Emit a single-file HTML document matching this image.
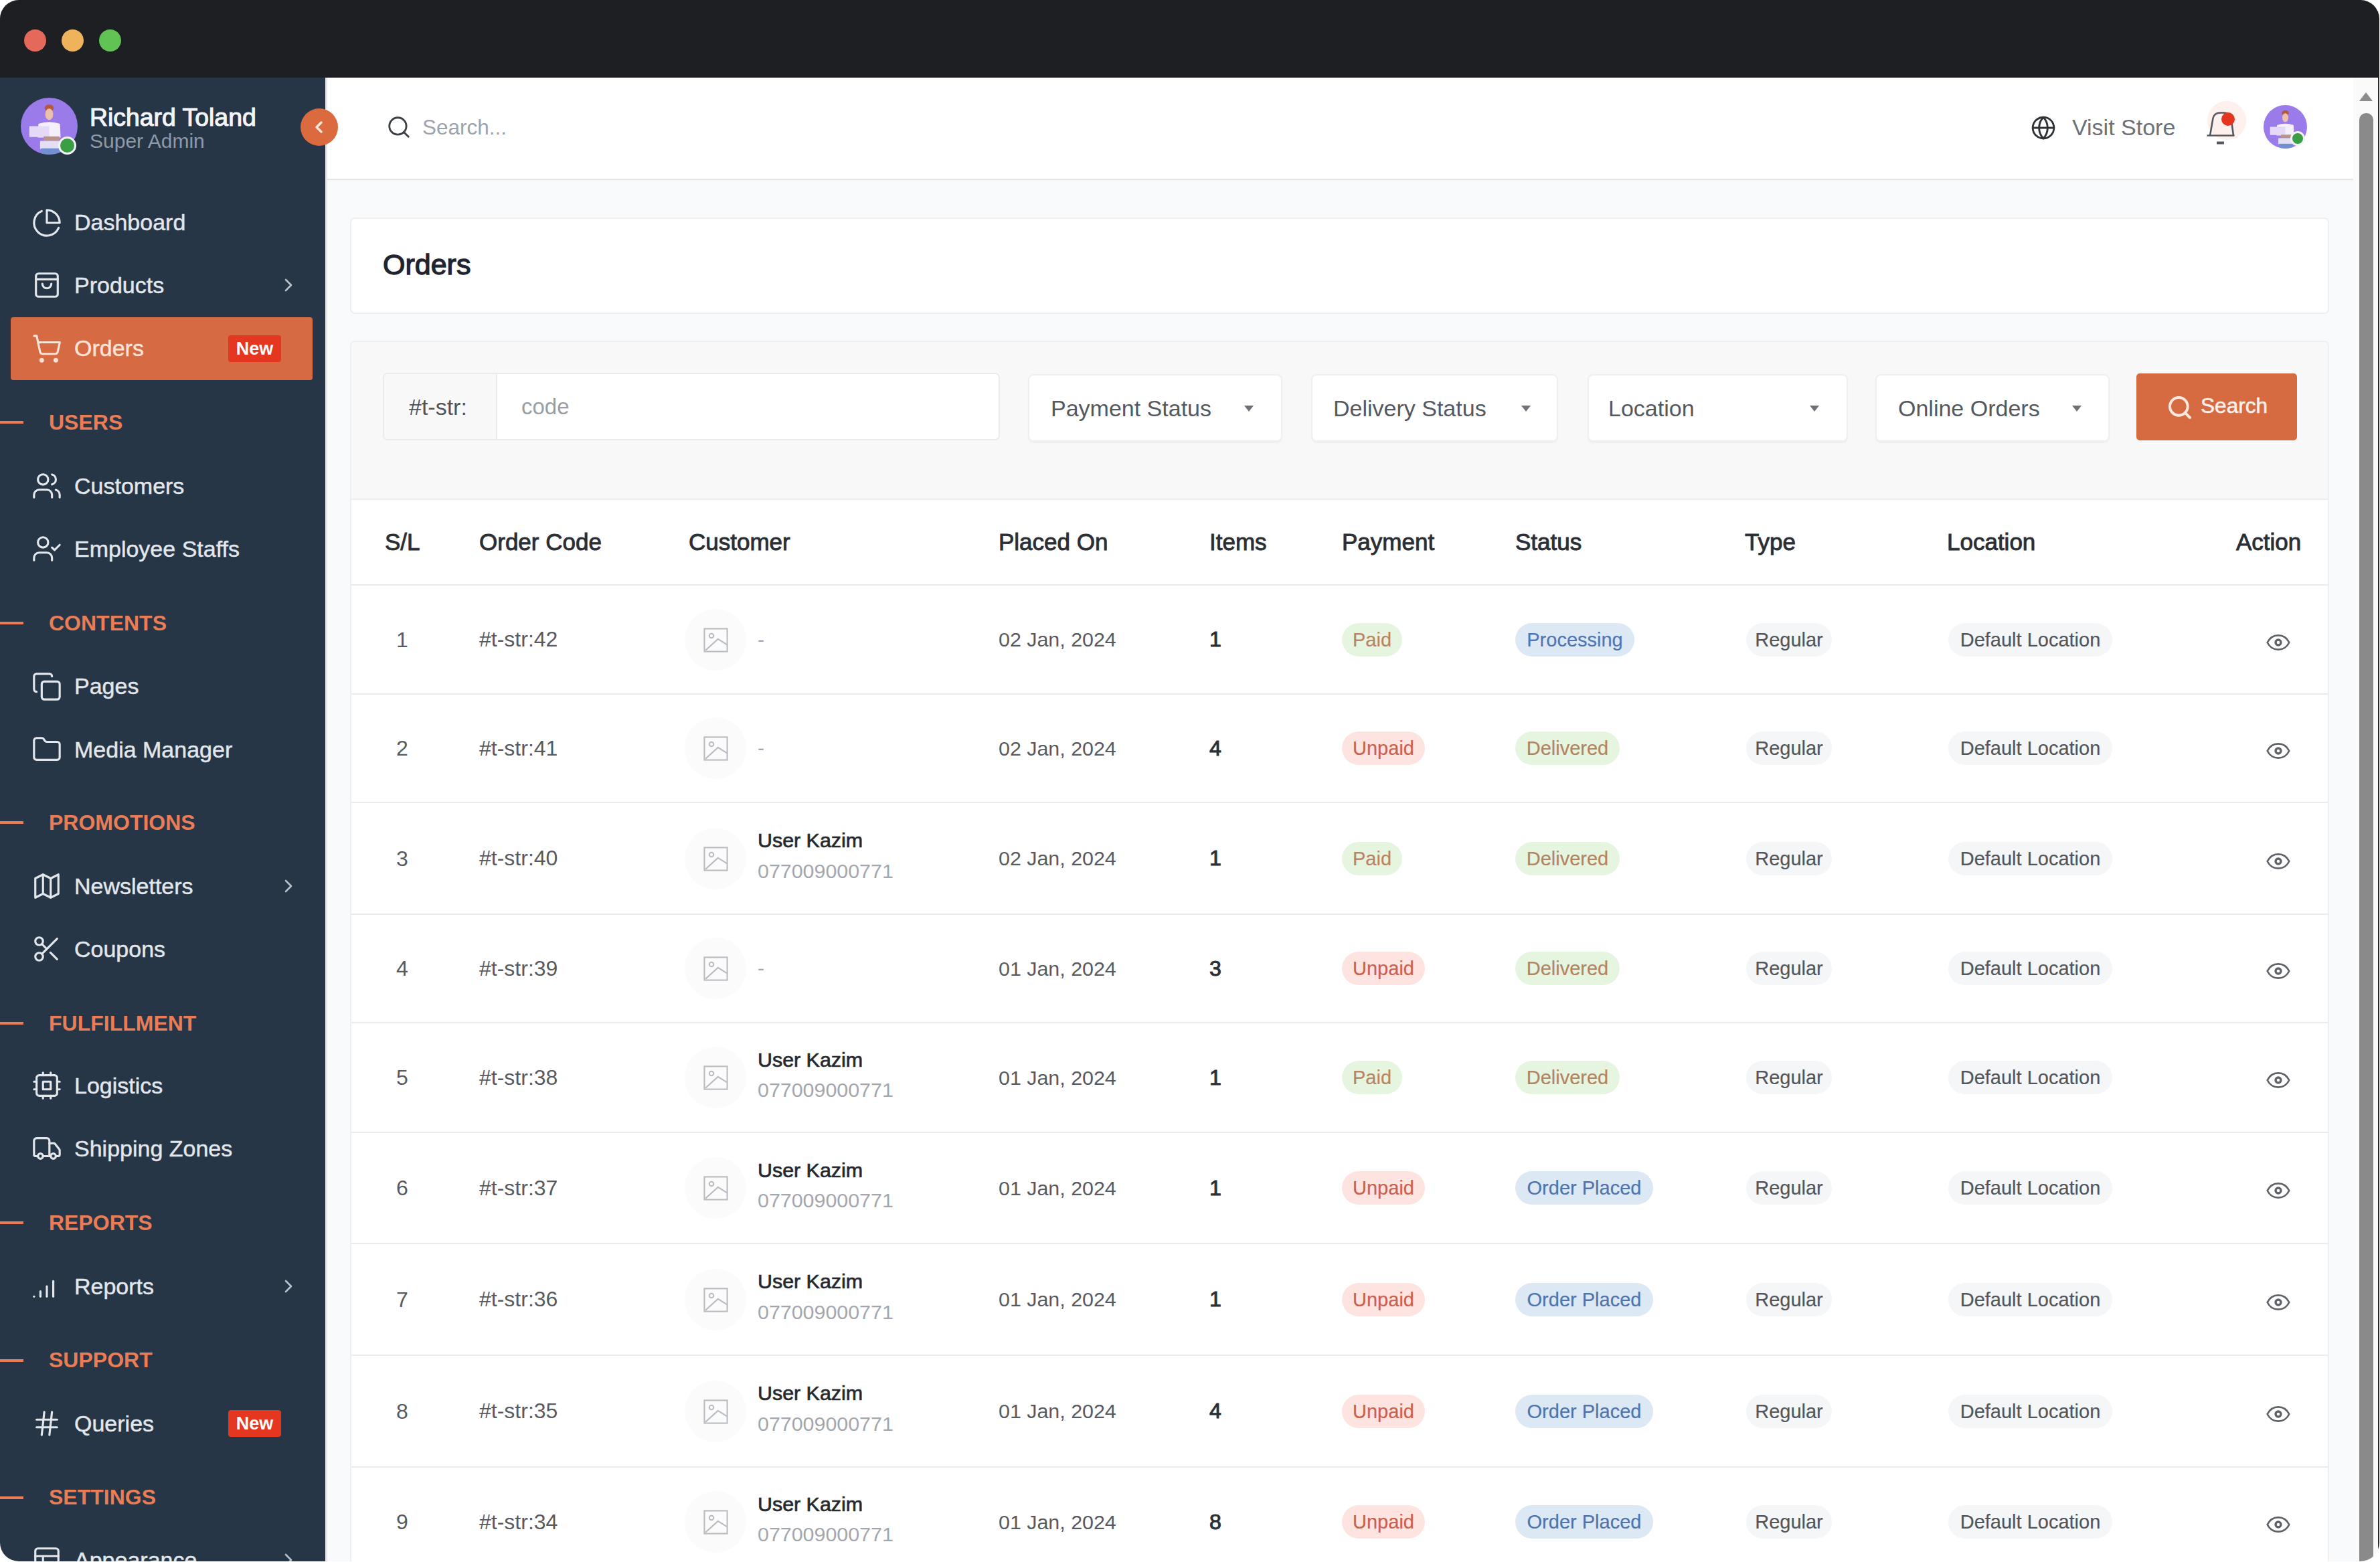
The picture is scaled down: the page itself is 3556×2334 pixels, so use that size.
<!DOCTYPE html><html><head><meta charset="utf-8"><style>
*{margin:0;padding:0;box-sizing:content-box}
html,body{width:3556px;height:2334px;overflow:hidden;background:#fff;font-family:"Liberation Sans", sans-serif}
#win{position:absolute;left:0;top:0;width:3555px;height:2333px;border-radius:28px;overflow:hidden;background:#f8f9fa}
#titlebar{position:absolute;left:0;top:0;width:100%;height:116px;background:#1e1f22}
#sidebar{position:absolute;left:0;top:116px;width:486px;height:2217px;background:#263647;overflow:hidden}
#sidebar > *{margin-top:-116px}
#main{position:absolute;left:486px;top:116px;width:3069px;height:2217px;background:#f9fafb;border-left:3px solid #e6e8eb;box-sizing:border-box}
#header{position:absolute;left:489px;top:116px;width:3027px;height:153px;background:#fff;border-bottom:2px solid #e6e6e8;box-sizing:border-box;box-shadow:0 1px 2px rgba(0,0,0,0.03)}
#sbtrack{position:absolute;left:3516px;top:116px;width:39px;height:2217px;background:#fafafb;border-right:2px solid #2b2b2e;box-sizing:border-box}
</style></head><body><div id="win"><div id="titlebar"></div><div style="position:absolute;left:36.0px;top:44.0px;width:33px;height:33px;border-radius:50%;background:#e5695b"></div><div style="position:absolute;left:91.5px;top:44.0px;width:33px;height:33px;border-radius:50%;background:#efb35c"></div><div style="position:absolute;left:147.5px;top:44.0px;width:33px;height:33px;border-radius:50%;background:#61c354"></div><div id="sidebar"><div style="position:absolute;left:30.5px;top:145.5px;width:85px;height:85px;border-radius:50%;background:#9b7bea;overflow:hidden"><svg width="85" height="85" viewBox="0 0 100 100" style="position:absolute;left:0;top:0"><ellipse cx="50" cy="18" rx="8" ry="6" fill="#b35a3c"/><ellipse cx="50" cy="29" rx="7" ry="10" fill="#ecc0ad"/><path d="M31 46 q19 -7 38 0 l1 24 h-40z" fill="#f4effa"/><rect x="15" y="50" width="35" height="19" rx="1" fill="#e4d9f6"/><rect x="40" y="68" width="28" height="8" fill="#b9948a"/><rect x="34" y="76" width="34" height="14" fill="#e3def3"/><rect x="36" y="89" width="32" height="11" fill="#7190d2"/></svg></div><div style="position:absolute;left:87.0px;top:203.5px;width:27px;height:27px;border-radius:50%;background:#3a9e44;box-sizing:border-box;border:3px solid #f3f3f3"></div><div style="position:absolute;left:134px;top:153.1px;height:44.9px;line-height:44.9px;font-size:37.4px;font-weight:400;color:#f2f4f7;white-space:nowrap;-webkit-text-stroke:1.1px #f2f4f7;">Richard Toland</div><div style="position:absolute;left:134px;top:193.0px;height:36.0px;line-height:36.0px;font-size:30px;font-weight:400;color:#8f99a8;white-space:nowrap;">Super Admin</div><svg style="position:absolute;left:47px;top:309.5px" width="46" height="46" viewBox="0 0 24 24" fill="none" stroke="#e3e7ec" stroke-width="1.65" stroke-linecap="round" stroke-linejoin="round"><path d="M21.2 15.9A10 10 0 1 1 8 2.8"/><path d="M22 12A10 10 0 0 0 12 2v10z"/></svg><div style="position:absolute;left:111px;top:312.1px;height:40.8px;line-height:40.8px;font-size:34px;font-weight:400;color:#e3e7ec;white-space:nowrap;-webkit-text-stroke:0.45px #e3e7ec;">Dashboard</div><svg style="position:absolute;left:47px;top:403.0px" width="46" height="46" viewBox="0 0 24 24" fill="none" stroke="#e3e7ec" stroke-width="1.65" stroke-linecap="round" stroke-linejoin="round"><rect x="3.5" y="3" width="17" height="18" rx="2"/><path d="M3.5 7.5h17"/><path d="M8.5 11a3.5 3.5 0 0 0 7 0"/></svg><div style="position:absolute;left:111px;top:405.6px;height:40.8px;line-height:40.8px;font-size:34px;font-weight:400;color:#e3e7ec;white-space:nowrap;-webkit-text-stroke:0.45px #e3e7ec;">Products</div><svg style="position:absolute;left:420px;top:414px" width="22" height="24" viewBox="0 0 22 24" fill="none" stroke="#b9c0ca" stroke-width="2.6" stroke-linecap="round" stroke-linejoin="round"><path d="M7 4l8 8-8 8"/></svg><div style="position:absolute;left:16px;top:473.5px;width:451px;height:94px;border-radius:4px;background:#d66b43"></div><svg style="position:absolute;left:47px;top:497.5px" width="46" height="46" viewBox="0 0 24 24" fill="none" stroke="#fbe3d8" stroke-width="1.65" stroke-linecap="round" stroke-linejoin="round"><circle cx="8" cy="21" r="1"/><circle cx="19" cy="21" r="1"/><path d="M2.05 2.05h2l2.66 12.42a2 2 0 0 0 2 1.58h9.78a2 2 0 0 0 1.95-1.57l1.65-7.43H5.12"/></svg><div style="position:absolute;left:111px;top:500.1px;height:40.8px;line-height:40.8px;font-size:34px;font-weight:400;color:#fbe3d8;white-space:nowrap;-webkit-text-stroke:0.45px #fbe3d8;">Orders</div><div style="position:absolute;left:341px;top:500.5px;width:79px;height:40px;border-radius:4px;background:#e5371f;color:#fff;font-size:27px;font-weight:700;line-height:40px;text-align:center">New</div><div style="position:absolute;left:0;top:629px;width:35px;height:4px;background:#ea7d55"></div><div style="position:absolute;left:73px;top:611.8px;height:38.4px;line-height:38.4px;font-size:32px;font-weight:700;color:#ea7d55;white-space:nowrap;">USERS</div><svg style="position:absolute;left:47px;top:703.0px" width="46" height="46" viewBox="0 0 24 24" fill="none" stroke="#e3e7ec" stroke-width="1.65" stroke-linecap="round" stroke-linejoin="round"><path d="M16 21v-2a4 4 0 0 0-4-4H6a4 4 0 0 0-4 4v2"/><circle cx="9" cy="7" r="4"/><path d="M22 21v-2a4 4 0 0 0-3-3.87"/><path d="M16 3.13a4 4 0 0 1 0 7.75"/></svg><div style="position:absolute;left:111px;top:705.6px;height:40.8px;line-height:40.8px;font-size:34px;font-weight:400;color:#e3e7ec;white-space:nowrap;-webkit-text-stroke:0.45px #e3e7ec;">Customers</div><svg style="position:absolute;left:47px;top:797.0px" width="46" height="46" viewBox="0 0 24 24" fill="none" stroke="#e3e7ec" stroke-width="1.65" stroke-linecap="round" stroke-linejoin="round"><path d="M16 21v-2a4 4 0 0 0-4-4H6a4 4 0 0 0-4 4v2"/><circle cx="9" cy="7" r="4"/><polyline points="16 11 18 13 22 9"/></svg><div style="position:absolute;left:111px;top:799.6px;height:40.8px;line-height:40.8px;font-size:34px;font-weight:400;color:#e3e7ec;white-space:nowrap;-webkit-text-stroke:0.45px #e3e7ec;">Employee Staffs</div><div style="position:absolute;left:0;top:929px;width:35px;height:4px;background:#ea7d55"></div><div style="position:absolute;left:73px;top:911.8px;height:38.4px;line-height:38.4px;font-size:32px;font-weight:700;color:#ea7d55;white-space:nowrap;">CONTENTS</div><svg style="position:absolute;left:47px;top:1002.5px" width="46" height="46" viewBox="0 0 24 24" fill="none" stroke="#e3e7ec" stroke-width="1.65" stroke-linecap="round" stroke-linejoin="round"><rect x="8" y="8" width="14" height="14" rx="2"/><path d="M4 16c-1.1 0-2-.9-2-2V4c0-1.1.9-2 2-2h10c1.1 0 2 .9 2 2"/></svg><div style="position:absolute;left:111px;top:1005.1px;height:40.8px;line-height:40.8px;font-size:34px;font-weight:400;color:#e3e7ec;white-space:nowrap;-webkit-text-stroke:0.45px #e3e7ec;">Pages</div><svg style="position:absolute;left:47px;top:1097.0px" width="46" height="46" viewBox="0 0 24 24" fill="none" stroke="#e3e7ec" stroke-width="1.65" stroke-linecap="round" stroke-linejoin="round"><path d="M4 20h16a2 2 0 0 0 2-2V8a2 2 0 0 0-2-2h-7.93a2 2 0 0 1-1.66-.9l-.82-1.2A2 2 0 0 0 7.93 3H4a2 2 0 0 0-2 2v13c0 1.1.9 2 2 2Z"/></svg><div style="position:absolute;left:111px;top:1099.6px;height:40.8px;line-height:40.8px;font-size:34px;font-weight:400;color:#e3e7ec;white-space:nowrap;-webkit-text-stroke:0.45px #e3e7ec;">Media Manager</div><div style="position:absolute;left:0;top:1227px;width:35px;height:4px;background:#ea7d55"></div><div style="position:absolute;left:73px;top:1209.8px;height:38.4px;line-height:38.4px;font-size:32px;font-weight:700;color:#ea7d55;white-space:nowrap;">PROMOTIONS</div><svg style="position:absolute;left:47px;top:1301.0px" width="46" height="46" viewBox="0 0 24 24" fill="none" stroke="#e3e7ec" stroke-width="1.65" stroke-linecap="round" stroke-linejoin="round"><polygon points="3 6 9 3 15 6 21 3 21 18 15 21 9 18 3 21"/><line x1="9" x2="9" y1="3" y2="18"/><line x1="15" x2="15" y1="6" y2="21"/></svg><div style="position:absolute;left:111px;top:1303.6px;height:40.8px;line-height:40.8px;font-size:34px;font-weight:400;color:#e3e7ec;white-space:nowrap;-webkit-text-stroke:0.45px #e3e7ec;">Newsletters</div><svg style="position:absolute;left:420px;top:1312px" width="22" height="24" viewBox="0 0 22 24" fill="none" stroke="#b9c0ca" stroke-width="2.6" stroke-linecap="round" stroke-linejoin="round"><path d="M7 4l8 8-8 8"/></svg><svg style="position:absolute;left:47px;top:1395.0px" width="46" height="46" viewBox="0 0 24 24" fill="none" stroke="#e3e7ec" stroke-width="1.65" stroke-linecap="round" stroke-linejoin="round"><circle cx="6" cy="6" r="3"/><path d="M8.12 8.12 12 12"/><path d="M20 4 8.12 15.88"/><circle cx="6" cy="18" r="3"/><path d="M14.8 14.8 20 20"/></svg><div style="position:absolute;left:111px;top:1397.6px;height:40.8px;line-height:40.8px;font-size:34px;font-weight:400;color:#e3e7ec;white-space:nowrap;-webkit-text-stroke:0.45px #e3e7ec;">Coupons</div><div style="position:absolute;left:0;top:1527px;width:35px;height:4px;background:#ea7d55"></div><div style="position:absolute;left:73px;top:1509.8px;height:38.4px;line-height:38.4px;font-size:32px;font-weight:700;color:#ea7d55;white-space:nowrap;">FULFILLMENT</div><svg style="position:absolute;left:47px;top:1599.0px" width="46" height="46" viewBox="0 0 24 24" fill="none" stroke="#e3e7ec" stroke-width="1.65" stroke-linecap="round" stroke-linejoin="round"><rect x="4" y="4" width="16" height="16" rx="2"/><rect x="9" y="9" width="6" height="6"/><path d="M15 2v2M15 20v2M2 15h2M2 9h2M20 15h2M20 9h2M9 2v2M9 20v2"/></svg><div style="position:absolute;left:111px;top:1601.6px;height:40.8px;line-height:40.8px;font-size:34px;font-weight:400;color:#e3e7ec;white-space:nowrap;-webkit-text-stroke:0.45px #e3e7ec;">Logistics</div><svg style="position:absolute;left:47px;top:1693.0px" width="46" height="46" viewBox="0 0 24 24" fill="none" stroke="#e3e7ec" stroke-width="1.65" stroke-linecap="round" stroke-linejoin="round"><path d="M14 18V6a2 2 0 0 0-2-2H4a2 2 0 0 0-2 2v11a1 1 0 0 0 1 1h2"/><path d="M15 18H9"/><path d="M19 18h2a1 1 0 0 0 1-1v-3.65a1 1 0 0 0-.22-.624l-3.48-4.35A1 1 0 0 0 17.52 8H14"/><circle cx="17" cy="18" r="2"/><circle cx="7" cy="18" r="2"/></svg><div style="position:absolute;left:111px;top:1695.6px;height:40.8px;line-height:40.8px;font-size:34px;font-weight:400;color:#e3e7ec;white-space:nowrap;-webkit-text-stroke:0.45px #e3e7ec;">Shipping Zones</div><div style="position:absolute;left:0;top:1825px;width:35px;height:4px;background:#ea7d55"></div><div style="position:absolute;left:73px;top:1807.8px;height:38.4px;line-height:38.4px;font-size:32px;font-weight:700;color:#ea7d55;white-space:nowrap;">REPORTS</div><svg style="position:absolute;left:47px;top:1899.0px" width="46" height="46" viewBox="0 0 24 24" fill="none" stroke="#e3e7ec" stroke-width="1.65" stroke-linecap="round" stroke-linejoin="round"><path d="M2 20h.01"/><path d="M7 20v-4"/><path d="M12 20v-8"/><path d="M17 20V8"/></svg><div style="position:absolute;left:111px;top:1901.6px;height:40.8px;line-height:40.8px;font-size:34px;font-weight:400;color:#e3e7ec;white-space:nowrap;-webkit-text-stroke:0.45px #e3e7ec;">Reports</div><svg style="position:absolute;left:420px;top:1910px" width="22" height="24" viewBox="0 0 22 24" fill="none" stroke="#b9c0ca" stroke-width="2.6" stroke-linecap="round" stroke-linejoin="round"><path d="M7 4l8 8-8 8"/></svg><div style="position:absolute;left:0;top:2030.5px;width:35px;height:4px;background:#ea7d55"></div><div style="position:absolute;left:73px;top:2013.3px;height:38.4px;line-height:38.4px;font-size:32px;font-weight:700;color:#ea7d55;white-space:nowrap;">SUPPORT</div><svg style="position:absolute;left:47px;top:2104.0px" width="46" height="46" viewBox="0 0 24 24" fill="none" stroke="#e3e7ec" stroke-width="1.65" stroke-linecap="round" stroke-linejoin="round"><line x1="4" x2="20" y1="9" y2="9"/><line x1="4" x2="20" y1="15" y2="15"/><line x1="10" x2="8" y1="3" y2="21"/><line x1="16" x2="14" y1="3" y2="21"/></svg><div style="position:absolute;left:111px;top:2106.6px;height:40.8px;line-height:40.8px;font-size:34px;font-weight:400;color:#e3e7ec;white-space:nowrap;-webkit-text-stroke:0.45px #e3e7ec;">Queries</div><div style="position:absolute;left:341px;top:2107px;width:79px;height:40px;border-radius:4px;background:#e5371f;color:#fff;font-size:27px;font-weight:700;line-height:40px;text-align:center">New</div><div style="position:absolute;left:0;top:2235.5px;width:35px;height:4px;background:#ea7d55"></div><div style="position:absolute;left:73px;top:2218.3px;height:38.4px;line-height:38.4px;font-size:32px;font-weight:700;color:#ea7d55;white-space:nowrap;">SETTINGS</div><svg style="position:absolute;left:47px;top:2308.0px" width="46" height="46" viewBox="0 0 24 24" fill="none" stroke="#e3e7ec" stroke-width="1.65" stroke-linecap="round" stroke-linejoin="round"><rect width="18" height="18" x="3" y="3" rx="2"/><path d="M3 9h18"/><path d="M9 21V9"/></svg><div style="position:absolute;left:111px;top:2310.6px;height:40.8px;line-height:40.8px;font-size:34px;font-weight:400;color:#e3e7ec;white-space:nowrap;-webkit-text-stroke:0.45px #e3e7ec;">Appearance</div><svg style="position:absolute;left:420px;top:2319px" width="22" height="24" viewBox="0 0 22 24" fill="none" stroke="#b9c0ca" stroke-width="2.6" stroke-linecap="round" stroke-linejoin="round"><path d="M7 4l8 8-8 8"/></svg></div><div id="main"></div><div id="header"></div><svg style="position:absolute;left:577px;top:171px" width="38" height="38" viewBox="0 0 24 24" fill="none" stroke="#3c4047" stroke-width="1.8" stroke-linecap="round"><circle cx="11" cy="11" r="8"/><path d="m21 21-4.3-4.3"/></svg><div style="position:absolute;left:631px;top:172.1px;height:37.8px;line-height:37.8px;font-size:31.5px;font-weight:400;color:#9fa3a9;white-space:nowrap;">Search...</div><svg style="position:absolute;left:3034px;top:172px" width="38" height="38" viewBox="0 0 24 24" fill="none" stroke="#2f3237" stroke-width="1.8" stroke-linecap="round"><circle cx="12" cy="12" r="10"/><path d="M12 2a14.5 14.5 0 0 0 0 20 14.5 14.5 0 0 0 0-20"/><path d="M2 12h20"/></svg><div style="position:absolute;left:3096px;top:169.6px;height:40.8px;line-height:40.8px;font-size:34px;font-weight:400;color:#6d7178;white-space:nowrap;">Visit Store</div><div style="position:absolute;left:3298px;top:151px;width:58px;height:58px;border-radius:50%;background:#fdf0ed"></div><svg style="position:absolute;left:3290px;top:160px" width="56" height="62" viewBox="3290 160 56 62" fill="none" stroke="#55585e" stroke-width="2.6" stroke-linejoin="round"><path d="M3297.5 202.5h41"/><path d="M3302 202.5l4.5-26q2-8 11-8h5q9 0 11 8l3.5 26"/><path d="M3312 211.5h11v4h-11z" fill="#55585e" stroke="none"/></svg><div style="position:absolute;left:3319px;top:168px;width:20px;height:20px;border-radius:50%;background:#e4361f"></div><div style="position:absolute;left:3381.5px;top:156.5px;width:65px;height:65px;border-radius:50%;background:#9b7bea;overflow:hidden"><svg width="65" height="65" viewBox="0 0 100 100" style="position:absolute;left:0;top:0"><ellipse cx="50" cy="18" rx="8" ry="6" fill="#b35a3c"/><ellipse cx="50" cy="29" rx="7" ry="10" fill="#ecc0ad"/><path d="M31 46 q19 -7 38 0 l1 24 h-40z" fill="#f4effa"/><rect x="15" y="50" width="35" height="19" rx="1" fill="#e4d9f6"/><rect x="40" y="68" width="28" height="8" fill="#b9948a"/><rect x="34" y="76" width="34" height="14" fill="#e3def3"/><rect x="36" y="89" width="32" height="11" fill="#7190d2"/></svg></div><div style="position:absolute;left:3422.0px;top:196.0px;width:22px;height:22px;border-radius:50%;background:#3a9e44;box-sizing:border-box;border:3px solid #f3f3f3"></div><div style="position:absolute;left:449px;top:162px;width:56px;height:56px;border-radius:50%;background:#db6a3e"></div><svg style="position:absolute;left:463px;top:176px" width="28" height="28" viewBox="0 0 28 28" fill="none" stroke="#fbe6dc" stroke-width="3.5" stroke-linecap="round" stroke-linejoin="round"><path d="M17 7l-7 7 7 7"/></svg><div id="sbtrack"></div><svg style="position:absolute;left:3524px;top:136px" width="22" height="16" viewBox="0 0 22 16"><path d="M1 15L11 2l10 13z" fill="#8c8c8c"/></svg><div style="position:absolute;left:3525px;top:169px;width:21px;height:2180px;border-radius:10px;background:#8a8a8a"></div><div style="position:absolute;left:523px;top:325px;width:2957px;height:144px;box-sizing:border-box;border:2px solid #eeeff1;border-radius:7px;background:#fff"></div><div style="position:absolute;left:572px;top:369.7px;height:51.6px;line-height:51.6px;font-size:43px;font-weight:400;color:#1f2430;white-space:nowrap;-webkit-text-stroke:1.3px #1f2430;">Orders</div><div style="position:absolute;left:523px;top:509px;width:2957px;height:1900px;box-sizing:border-box;border:2px solid #eeeff1;border-radius:7px;background:#fff;overflow:hidden"><div style="position:absolute;left:0;top:0;right:0;height:234px;background:#f8f8f8;border-bottom:2px solid #ececec"></div></div><div style="position:absolute;left:572px;top:557px;width:922px;height:101px;box-sizing:border-box;border:2px solid #ebebeb;border-radius:7px;background:#fff;overflow:hidden"><div style="position:absolute;left:0;top:0;width:167px;height:100%;background:#f8f8f9;border-right:2px solid #ebebeb"></div></div><div style="position:absolute;left:611px;top:587.6px;height:40.8px;line-height:40.8px;font-size:34px;font-weight:400;color:#50545a;white-space:nowrap;">#t-str:</div><div style="position:absolute;left:779px;top:588.2px;height:39.6px;line-height:39.6px;font-size:33px;font-weight:400;color:#9a9ea4;white-space:nowrap;">code</div><div style="position:absolute;left:1536px;top:559px;width:380px;height:101px;box-sizing:border-box;border:2px solid #efefef;border-radius:8px;background:#fff;box-shadow:0 2px 2px rgba(0,0,0,0.04)"></div><div style="position:absolute;left:1570px;top:589.6px;height:40.8px;line-height:40.8px;font-size:34px;font-weight:400;color:#55595f;white-space:nowrap;">Payment Status</div><svg style="position:absolute;left:1857px;top:604px" width="18" height="12" viewBox="0 0 18 12"><path d="M2 2h14l-7 9z" fill="#6e7277"/></svg><div style="position:absolute;left:1959px;top:559px;width:369px;height:101px;box-sizing:border-box;border:2px solid #efefef;border-radius:8px;background:#fff;box-shadow:0 2px 2px rgba(0,0,0,0.04)"></div><div style="position:absolute;left:1992px;top:589.6px;height:40.8px;line-height:40.8px;font-size:34px;font-weight:400;color:#55595f;white-space:nowrap;">Delivery Status</div><svg style="position:absolute;left:2271px;top:604px" width="18" height="12" viewBox="0 0 18 12"><path d="M2 2h14l-7 9z" fill="#6e7277"/></svg><div style="position:absolute;left:2372px;top:559px;width:389px;height:101px;box-sizing:border-box;border:2px solid #efefef;border-radius:8px;background:#fff;box-shadow:0 2px 2px rgba(0,0,0,0.04)"></div><div style="position:absolute;left:2403px;top:589.6px;height:40.8px;line-height:40.8px;font-size:34px;font-weight:400;color:#55595f;white-space:nowrap;">Location</div><svg style="position:absolute;left:2702px;top:604px" width="18" height="12" viewBox="0 0 18 12"><path d="M2 2h14l-7 9z" fill="#6e7277"/></svg><div style="position:absolute;left:2802px;top:559px;width:350px;height:101px;box-sizing:border-box;border:2px solid #efefef;border-radius:8px;background:#fff;box-shadow:0 2px 2px rgba(0,0,0,0.04)"></div><div style="position:absolute;left:2836px;top:589.6px;height:40.8px;line-height:40.8px;font-size:34px;font-weight:400;color:#55595f;white-space:nowrap;">Online Orders</div><svg style="position:absolute;left:3094px;top:604px" width="18" height="12" viewBox="0 0 18 12"><path d="M2 2h14l-7 9z" fill="#6e7277"/></svg><div style="position:absolute;left:3192px;top:558px;width:240px;height:100px;border-radius:5px;background:#d66a41"></div><svg style="position:absolute;left:3237px;top:589px" width="40" height="40" viewBox="0 0 24 24" fill="none" stroke="#fde9df" stroke-width="2.4" stroke-linecap="round"><circle cx="11" cy="11" r="8"/><path d="m21 21-4.3-4.3"/></svg><div style="position:absolute;left:3288px;top:588.0px;height:37.9px;line-height:37.9px;font-size:31.6px;font-weight:400;color:#fdf0ea;white-space:nowrap;-webkit-text-stroke:0.6px #fdf0ea;">Search</div><div style="position:absolute;left:575px;top:789.0px;height:42.0px;line-height:42.0px;font-size:35px;font-weight:400;color:#2a2e35;white-space:nowrap;-webkit-text-stroke:0.9px #2a2e35;">S/L</div><div style="position:absolute;left:716px;top:789.0px;height:42.0px;line-height:42.0px;font-size:35px;font-weight:400;color:#2a2e35;white-space:nowrap;-webkit-text-stroke:0.9px #2a2e35;">Order Code</div><div style="position:absolute;left:1029px;top:789.0px;height:42.0px;line-height:42.0px;font-size:35px;font-weight:400;color:#2a2e35;white-space:nowrap;-webkit-text-stroke:0.9px #2a2e35;">Customer</div><div style="position:absolute;left:1492px;top:789.0px;height:42.0px;line-height:42.0px;font-size:35px;font-weight:400;color:#2a2e35;white-space:nowrap;-webkit-text-stroke:0.9px #2a2e35;">Placed On</div><div style="position:absolute;left:1807px;top:789.0px;height:42.0px;line-height:42.0px;font-size:35px;font-weight:400;color:#2a2e35;white-space:nowrap;-webkit-text-stroke:0.9px #2a2e35;">Items</div><div style="position:absolute;left:2005px;top:789.0px;height:42.0px;line-height:42.0px;font-size:35px;font-weight:400;color:#2a2e35;white-space:nowrap;-webkit-text-stroke:0.9px #2a2e35;">Payment</div><div style="position:absolute;left:2264px;top:789.0px;height:42.0px;line-height:42.0px;font-size:35px;font-weight:400;color:#2a2e35;white-space:nowrap;-webkit-text-stroke:0.9px #2a2e35;">Status</div><div style="position:absolute;left:2607px;top:789.0px;height:42.0px;line-height:42.0px;font-size:35px;font-weight:400;color:#2a2e35;white-space:nowrap;-webkit-text-stroke:0.9px #2a2e35;">Type</div><div style="position:absolute;left:2909px;top:789.0px;height:42.0px;line-height:42.0px;font-size:35px;font-weight:400;color:#2a2e35;white-space:nowrap;-webkit-text-stroke:0.9px #2a2e35;">Location</div><div style="position:absolute;left:3341px;top:789.0px;height:42.0px;line-height:42.0px;font-size:35px;font-weight:400;color:#2a2e35;white-space:nowrap;-webkit-text-stroke:0.9px #2a2e35;">Action</div><div style="position:absolute;left:525px;top:873px;width:2953px;height:2px;background:#eaebed"></div><div style="position:absolute;left:525px;top:1036px;width:2953px;height:2px;background:#eaebed"></div><div style="position:absolute;left:525px;top:1198px;width:2953px;height:2px;background:#eaebed"></div><div style="position:absolute;left:525px;top:1365px;width:2953px;height:2px;background:#eaebed"></div><div style="position:absolute;left:525px;top:1527px;width:2953px;height:2px;background:#eaebed"></div><div style="position:absolute;left:525px;top:1691px;width:2953px;height:2px;background:#eaebed"></div><div style="position:absolute;left:525px;top:1857px;width:2953px;height:2px;background:#eaebed"></div><div style="position:absolute;left:525px;top:2024px;width:2953px;height:2px;background:#eaebed"></div><div style="position:absolute;left:525px;top:2191px;width:2953px;height:2px;background:#eaebed"></div><div style="position:absolute;left:561px;top:935.5px;width:80px;height:40px;line-height:40px;text-align:center;font-size:32px;color:#575b61">1</div><div style="position:absolute;left:716px;top:936.3px;height:38.4px;line-height:38.4px;font-size:32px;font-weight:400;color:#575b61;white-space:nowrap;">#t-str:42</div><div style="position:absolute;left:1023px;top:909.5px;width:92px;height:92px;border-radius:50%;background:#fbfbfc"></div><svg style="position:absolute;left:1050px;top:936.5px" width="39" height="39" viewBox="0 0 24 24" fill="none" stroke="#b9bcc1" stroke-width="1.3" stroke-linecap="square"><rect x="1.5" y="1.5" width="21" height="21"/><circle cx="8" cy="8" r="2"/><path d="M3 21l11-10 8 5"/></svg><div style="position:absolute;left:1132px;top:937.5px;height:36.0px;line-height:36.0px;font-size:30px;font-weight:400;color:#a3a7ad;white-space:nowrap;">-</div><div style="position:absolute;left:1492px;top:937.3px;height:36.5px;line-height:36.5px;font-size:30.4px;font-weight:400;color:#575b61;white-space:nowrap;">02 Jan, 2024</div><div style="position:absolute;left:1807px;top:936.3px;height:38.4px;line-height:38.4px;font-size:32px;font-weight:400;color:#2b2f36;white-space:nowrap;-webkit-text-stroke:1.0px #2b2f36;">1</div><div style="position:absolute;left:2005px;top:930.5px;width:90px;height:50px;border-radius:25px;background:#e5f5e0;color:#b98462;font-size:29px;line-height:50px;text-align:center;white-space:nowrap;-webkit-text-stroke:0.2px #b98462">Paid</div><div style="position:absolute;left:2264px;top:930.5px;width:178px;height:50px;border-radius:25px;background:#dde8f5;color:#4f76b5;font-size:29px;line-height:50px;text-align:center;white-space:nowrap;-webkit-text-stroke:0.2px #4f76b5">Processing</div><div style="position:absolute;left:2609px;top:930.5px;width:128px;height:50px;border-radius:25px;background:#f5f6f8;color:#52565c;font-size:29px;line-height:50px;text-align:center;white-space:nowrap;-webkit-text-stroke:0.2px #52565c">Regular</div><div style="position:absolute;left:2911px;top:930.5px;width:245px;height:50px;border-radius:25px;background:#f5f6f8;color:#52565c;font-size:29px;line-height:50px;text-align:center;white-space:nowrap;-webkit-text-stroke:0.2px #52565c">Default Location</div><svg style="position:absolute;left:3384px;top:939.5px" width="40" height="40" viewBox="0 0 24 24" fill="none" stroke="#5f6369" stroke-width="1.6" stroke-linecap="round" stroke-linejoin="round"><path d="M2.2 12C4.2 8 7.8 5.6 12 5.6S19.8 8 21.8 12C19.8 16 16.2 18.4 12 18.4S4.2 16 2.2 12z"/><circle cx="12" cy="12" r="2.4" stroke-width="2"/></svg><div style="position:absolute;left:561px;top:1098.0px;width:80px;height:40px;line-height:40px;text-align:center;font-size:32px;color:#575b61">2</div><div style="position:absolute;left:716px;top:1098.8px;height:38.4px;line-height:38.4px;font-size:32px;font-weight:400;color:#575b61;white-space:nowrap;">#t-str:41</div><div style="position:absolute;left:1023px;top:1072.0px;width:92px;height:92px;border-radius:50%;background:#fbfbfc"></div><svg style="position:absolute;left:1050px;top:1099.0px" width="39" height="39" viewBox="0 0 24 24" fill="none" stroke="#b9bcc1" stroke-width="1.3" stroke-linecap="square"><rect x="1.5" y="1.5" width="21" height="21"/><circle cx="8" cy="8" r="2"/><path d="M3 21l11-10 8 5"/></svg><div style="position:absolute;left:1132px;top:1100.0px;height:36.0px;line-height:36.0px;font-size:30px;font-weight:400;color:#a3a7ad;white-space:nowrap;">-</div><div style="position:absolute;left:1492px;top:1099.8px;height:36.5px;line-height:36.5px;font-size:30.4px;font-weight:400;color:#575b61;white-space:nowrap;">02 Jan, 2024</div><div style="position:absolute;left:1807px;top:1098.8px;height:38.4px;line-height:38.4px;font-size:32px;font-weight:400;color:#2b2f36;white-space:nowrap;-webkit-text-stroke:1.0px #2b2f36;">4</div><div style="position:absolute;left:2005px;top:1093.0px;width:124px;height:50px;border-radius:25px;background:#fde4e0;color:#cc5f4b;font-size:29px;line-height:50px;text-align:center;white-space:nowrap;-webkit-text-stroke:0.2px #cc5f4b">Unpaid</div><div style="position:absolute;left:2264px;top:1093.0px;width:156px;height:50px;border-radius:25px;background:#e5f5e0;color:#b38462;font-size:29px;line-height:50px;text-align:center;white-space:nowrap;-webkit-text-stroke:0.2px #b38462">Delivered</div><div style="position:absolute;left:2609px;top:1093.0px;width:128px;height:50px;border-radius:25px;background:#f5f6f8;color:#52565c;font-size:29px;line-height:50px;text-align:center;white-space:nowrap;-webkit-text-stroke:0.2px #52565c">Regular</div><div style="position:absolute;left:2911px;top:1093.0px;width:245px;height:50px;border-radius:25px;background:#f5f6f8;color:#52565c;font-size:29px;line-height:50px;text-align:center;white-space:nowrap;-webkit-text-stroke:0.2px #52565c">Default Location</div><svg style="position:absolute;left:3384px;top:1102.0px" width="40" height="40" viewBox="0 0 24 24" fill="none" stroke="#5f6369" stroke-width="1.6" stroke-linecap="round" stroke-linejoin="round"><path d="M2.2 12C4.2 8 7.8 5.6 12 5.6S19.8 8 21.8 12C19.8 16 16.2 18.4 12 18.4S4.2 16 2.2 12z"/><circle cx="12" cy="12" r="2.4" stroke-width="2"/></svg><div style="position:absolute;left:561px;top:1262.5px;width:80px;height:40px;line-height:40px;text-align:center;font-size:32px;color:#575b61">3</div><div style="position:absolute;left:716px;top:1263.3px;height:38.4px;line-height:38.4px;font-size:32px;font-weight:400;color:#575b61;white-space:nowrap;">#t-str:40</div><div style="position:absolute;left:1023px;top:1236.5px;width:92px;height:92px;border-radius:50%;background:#fbfbfc"></div><svg style="position:absolute;left:1050px;top:1263.5px" width="39" height="39" viewBox="0 0 24 24" fill="none" stroke="#b9bcc1" stroke-width="1.3" stroke-linecap="square"><rect x="1.5" y="1.5" width="21" height="21"/><circle cx="8" cy="8" r="2"/><path d="M3 21l11-10 8 5"/></svg><div style="position:absolute;left:1132px;top:1237.3px;height:36.5px;line-height:36.5px;font-size:30.4px;font-weight:400;color:#25292f;white-space:nowrap;-webkit-text-stroke:0.7px #25292f;">User Kazim</div><div style="position:absolute;left:1132px;top:1282.8px;height:36.5px;line-height:36.5px;font-size:30.4px;font-weight:400;color:#a3a7ad;white-space:nowrap;">077009000771</div><div style="position:absolute;left:1492px;top:1264.3px;height:36.5px;line-height:36.5px;font-size:30.4px;font-weight:400;color:#575b61;white-space:nowrap;">02 Jan, 2024</div><div style="position:absolute;left:1807px;top:1263.3px;height:38.4px;line-height:38.4px;font-size:32px;font-weight:400;color:#2b2f36;white-space:nowrap;-webkit-text-stroke:1.0px #2b2f36;">1</div><div style="position:absolute;left:2005px;top:1257.5px;width:90px;height:50px;border-radius:25px;background:#e5f5e0;color:#b98462;font-size:29px;line-height:50px;text-align:center;white-space:nowrap;-webkit-text-stroke:0.2px #b98462">Paid</div><div style="position:absolute;left:2264px;top:1257.5px;width:156px;height:50px;border-radius:25px;background:#e5f5e0;color:#b38462;font-size:29px;line-height:50px;text-align:center;white-space:nowrap;-webkit-text-stroke:0.2px #b38462">Delivered</div><div style="position:absolute;left:2609px;top:1257.5px;width:128px;height:50px;border-radius:25px;background:#f5f6f8;color:#52565c;font-size:29px;line-height:50px;text-align:center;white-space:nowrap;-webkit-text-stroke:0.2px #52565c">Regular</div><div style="position:absolute;left:2911px;top:1257.5px;width:245px;height:50px;border-radius:25px;background:#f5f6f8;color:#52565c;font-size:29px;line-height:50px;text-align:center;white-space:nowrap;-webkit-text-stroke:0.2px #52565c">Default Location</div><svg style="position:absolute;left:3384px;top:1266.5px" width="40" height="40" viewBox="0 0 24 24" fill="none" stroke="#5f6369" stroke-width="1.6" stroke-linecap="round" stroke-linejoin="round"><path d="M2.2 12C4.2 8 7.8 5.6 12 5.6S19.8 8 21.8 12C19.8 16 16.2 18.4 12 18.4S4.2 16 2.2 12z"/><circle cx="12" cy="12" r="2.4" stroke-width="2"/></svg><div style="position:absolute;left:561px;top:1427.0px;width:80px;height:40px;line-height:40px;text-align:center;font-size:32px;color:#575b61">4</div><div style="position:absolute;left:716px;top:1427.8px;height:38.4px;line-height:38.4px;font-size:32px;font-weight:400;color:#575b61;white-space:nowrap;">#t-str:39</div><div style="position:absolute;left:1023px;top:1401.0px;width:92px;height:92px;border-radius:50%;background:#fbfbfc"></div><svg style="position:absolute;left:1050px;top:1428.0px" width="39" height="39" viewBox="0 0 24 24" fill="none" stroke="#b9bcc1" stroke-width="1.3" stroke-linecap="square"><rect x="1.5" y="1.5" width="21" height="21"/><circle cx="8" cy="8" r="2"/><path d="M3 21l11-10 8 5"/></svg><div style="position:absolute;left:1132px;top:1429.0px;height:36.0px;line-height:36.0px;font-size:30px;font-weight:400;color:#a3a7ad;white-space:nowrap;">-</div><div style="position:absolute;left:1492px;top:1428.8px;height:36.5px;line-height:36.5px;font-size:30.4px;font-weight:400;color:#575b61;white-space:nowrap;">01 Jan, 2024</div><div style="position:absolute;left:1807px;top:1427.8px;height:38.4px;line-height:38.4px;font-size:32px;font-weight:400;color:#2b2f36;white-space:nowrap;-webkit-text-stroke:1.0px #2b2f36;">3</div><div style="position:absolute;left:2005px;top:1422.0px;width:124px;height:50px;border-radius:25px;background:#fde4e0;color:#cc5f4b;font-size:29px;line-height:50px;text-align:center;white-space:nowrap;-webkit-text-stroke:0.2px #cc5f4b">Unpaid</div><div style="position:absolute;left:2264px;top:1422.0px;width:156px;height:50px;border-radius:25px;background:#e5f5e0;color:#b38462;font-size:29px;line-height:50px;text-align:center;white-space:nowrap;-webkit-text-stroke:0.2px #b38462">Delivered</div><div style="position:absolute;left:2609px;top:1422.0px;width:128px;height:50px;border-radius:25px;background:#f5f6f8;color:#52565c;font-size:29px;line-height:50px;text-align:center;white-space:nowrap;-webkit-text-stroke:0.2px #52565c">Regular</div><div style="position:absolute;left:2911px;top:1422.0px;width:245px;height:50px;border-radius:25px;background:#f5f6f8;color:#52565c;font-size:29px;line-height:50px;text-align:center;white-space:nowrap;-webkit-text-stroke:0.2px #52565c">Default Location</div><svg style="position:absolute;left:3384px;top:1431.0px" width="40" height="40" viewBox="0 0 24 24" fill="none" stroke="#5f6369" stroke-width="1.6" stroke-linecap="round" stroke-linejoin="round"><path d="M2.2 12C4.2 8 7.8 5.6 12 5.6S19.8 8 21.8 12C19.8 16 16.2 18.4 12 18.4S4.2 16 2.2 12z"/><circle cx="12" cy="12" r="2.4" stroke-width="2"/></svg><div style="position:absolute;left:561px;top:1590.0px;width:80px;height:40px;line-height:40px;text-align:center;font-size:32px;color:#575b61">5</div><div style="position:absolute;left:716px;top:1590.8px;height:38.4px;line-height:38.4px;font-size:32px;font-weight:400;color:#575b61;white-space:nowrap;">#t-str:38</div><div style="position:absolute;left:1023px;top:1564.0px;width:92px;height:92px;border-radius:50%;background:#fbfbfc"></div><svg style="position:absolute;left:1050px;top:1591.0px" width="39" height="39" viewBox="0 0 24 24" fill="none" stroke="#b9bcc1" stroke-width="1.3" stroke-linecap="square"><rect x="1.5" y="1.5" width="21" height="21"/><circle cx="8" cy="8" r="2"/><path d="M3 21l11-10 8 5"/></svg><div style="position:absolute;left:1132px;top:1564.8px;height:36.5px;line-height:36.5px;font-size:30.4px;font-weight:400;color:#25292f;white-space:nowrap;-webkit-text-stroke:0.7px #25292f;">User Kazim</div><div style="position:absolute;left:1132px;top:1610.3px;height:36.5px;line-height:36.5px;font-size:30.4px;font-weight:400;color:#a3a7ad;white-space:nowrap;">077009000771</div><div style="position:absolute;left:1492px;top:1591.8px;height:36.5px;line-height:36.5px;font-size:30.4px;font-weight:400;color:#575b61;white-space:nowrap;">01 Jan, 2024</div><div style="position:absolute;left:1807px;top:1590.8px;height:38.4px;line-height:38.4px;font-size:32px;font-weight:400;color:#2b2f36;white-space:nowrap;-webkit-text-stroke:1.0px #2b2f36;">1</div><div style="position:absolute;left:2005px;top:1585.0px;width:90px;height:50px;border-radius:25px;background:#e5f5e0;color:#b98462;font-size:29px;line-height:50px;text-align:center;white-space:nowrap;-webkit-text-stroke:0.2px #b98462">Paid</div><div style="position:absolute;left:2264px;top:1585.0px;width:156px;height:50px;border-radius:25px;background:#e5f5e0;color:#b38462;font-size:29px;line-height:50px;text-align:center;white-space:nowrap;-webkit-text-stroke:0.2px #b38462">Delivered</div><div style="position:absolute;left:2609px;top:1585.0px;width:128px;height:50px;border-radius:25px;background:#f5f6f8;color:#52565c;font-size:29px;line-height:50px;text-align:center;white-space:nowrap;-webkit-text-stroke:0.2px #52565c">Regular</div><div style="position:absolute;left:2911px;top:1585.0px;width:245px;height:50px;border-radius:25px;background:#f5f6f8;color:#52565c;font-size:29px;line-height:50px;text-align:center;white-space:nowrap;-webkit-text-stroke:0.2px #52565c">Default Location</div><svg style="position:absolute;left:3384px;top:1594.0px" width="40" height="40" viewBox="0 0 24 24" fill="none" stroke="#5f6369" stroke-width="1.6" stroke-linecap="round" stroke-linejoin="round"><path d="M2.2 12C4.2 8 7.8 5.6 12 5.6S19.8 8 21.8 12C19.8 16 16.2 18.4 12 18.4S4.2 16 2.2 12z"/><circle cx="12" cy="12" r="2.4" stroke-width="2"/></svg><div style="position:absolute;left:561px;top:1755.0px;width:80px;height:40px;line-height:40px;text-align:center;font-size:32px;color:#575b61">6</div><div style="position:absolute;left:716px;top:1755.8px;height:38.4px;line-height:38.4px;font-size:32px;font-weight:400;color:#575b61;white-space:nowrap;">#t-str:37</div><div style="position:absolute;left:1023px;top:1729.0px;width:92px;height:92px;border-radius:50%;background:#fbfbfc"></div><svg style="position:absolute;left:1050px;top:1756.0px" width="39" height="39" viewBox="0 0 24 24" fill="none" stroke="#b9bcc1" stroke-width="1.3" stroke-linecap="square"><rect x="1.5" y="1.5" width="21" height="21"/><circle cx="8" cy="8" r="2"/><path d="M3 21l11-10 8 5"/></svg><div style="position:absolute;left:1132px;top:1729.8px;height:36.5px;line-height:36.5px;font-size:30.4px;font-weight:400;color:#25292f;white-space:nowrap;-webkit-text-stroke:0.7px #25292f;">User Kazim</div><div style="position:absolute;left:1132px;top:1775.3px;height:36.5px;line-height:36.5px;font-size:30.4px;font-weight:400;color:#a3a7ad;white-space:nowrap;">077009000771</div><div style="position:absolute;left:1492px;top:1756.8px;height:36.5px;line-height:36.5px;font-size:30.4px;font-weight:400;color:#575b61;white-space:nowrap;">01 Jan, 2024</div><div style="position:absolute;left:1807px;top:1755.8px;height:38.4px;line-height:38.4px;font-size:32px;font-weight:400;color:#2b2f36;white-space:nowrap;-webkit-text-stroke:1.0px #2b2f36;">1</div><div style="position:absolute;left:2005px;top:1750.0px;width:124px;height:50px;border-radius:25px;background:#fde4e0;color:#cc5f4b;font-size:29px;line-height:50px;text-align:center;white-space:nowrap;-webkit-text-stroke:0.2px #cc5f4b">Unpaid</div><div style="position:absolute;left:2264px;top:1750.0px;width:206px;height:50px;border-radius:25px;background:#dde8f5;color:#4f74ad;font-size:29px;line-height:50px;text-align:center;white-space:nowrap;-webkit-text-stroke:0.2px #4f74ad">Order Placed</div><div style="position:absolute;left:2609px;top:1750.0px;width:128px;height:50px;border-radius:25px;background:#f5f6f8;color:#52565c;font-size:29px;line-height:50px;text-align:center;white-space:nowrap;-webkit-text-stroke:0.2px #52565c">Regular</div><div style="position:absolute;left:2911px;top:1750.0px;width:245px;height:50px;border-radius:25px;background:#f5f6f8;color:#52565c;font-size:29px;line-height:50px;text-align:center;white-space:nowrap;-webkit-text-stroke:0.2px #52565c">Default Location</div><svg style="position:absolute;left:3384px;top:1759.0px" width="40" height="40" viewBox="0 0 24 24" fill="none" stroke="#5f6369" stroke-width="1.6" stroke-linecap="round" stroke-linejoin="round"><path d="M2.2 12C4.2 8 7.8 5.6 12 5.6S19.8 8 21.8 12C19.8 16 16.2 18.4 12 18.4S4.2 16 2.2 12z"/><circle cx="12" cy="12" r="2.4" stroke-width="2"/></svg><div style="position:absolute;left:561px;top:1921.5px;width:80px;height:40px;line-height:40px;text-align:center;font-size:32px;color:#575b61">7</div><div style="position:absolute;left:716px;top:1922.3px;height:38.4px;line-height:38.4px;font-size:32px;font-weight:400;color:#575b61;white-space:nowrap;">#t-str:36</div><div style="position:absolute;left:1023px;top:1895.5px;width:92px;height:92px;border-radius:50%;background:#fbfbfc"></div><svg style="position:absolute;left:1050px;top:1922.5px" width="39" height="39" viewBox="0 0 24 24" fill="none" stroke="#b9bcc1" stroke-width="1.3" stroke-linecap="square"><rect x="1.5" y="1.5" width="21" height="21"/><circle cx="8" cy="8" r="2"/><path d="M3 21l11-10 8 5"/></svg><div style="position:absolute;left:1132px;top:1896.3px;height:36.5px;line-height:36.5px;font-size:30.4px;font-weight:400;color:#25292f;white-space:nowrap;-webkit-text-stroke:0.7px #25292f;">User Kazim</div><div style="position:absolute;left:1132px;top:1941.8px;height:36.5px;line-height:36.5px;font-size:30.4px;font-weight:400;color:#a3a7ad;white-space:nowrap;">077009000771</div><div style="position:absolute;left:1492px;top:1923.3px;height:36.5px;line-height:36.5px;font-size:30.4px;font-weight:400;color:#575b61;white-space:nowrap;">01 Jan, 2024</div><div style="position:absolute;left:1807px;top:1922.3px;height:38.4px;line-height:38.4px;font-size:32px;font-weight:400;color:#2b2f36;white-space:nowrap;-webkit-text-stroke:1.0px #2b2f36;">1</div><div style="position:absolute;left:2005px;top:1916.5px;width:124px;height:50px;border-radius:25px;background:#fde4e0;color:#cc5f4b;font-size:29px;line-height:50px;text-align:center;white-space:nowrap;-webkit-text-stroke:0.2px #cc5f4b">Unpaid</div><div style="position:absolute;left:2264px;top:1916.5px;width:206px;height:50px;border-radius:25px;background:#dde8f5;color:#4f74ad;font-size:29px;line-height:50px;text-align:center;white-space:nowrap;-webkit-text-stroke:0.2px #4f74ad">Order Placed</div><div style="position:absolute;left:2609px;top:1916.5px;width:128px;height:50px;border-radius:25px;background:#f5f6f8;color:#52565c;font-size:29px;line-height:50px;text-align:center;white-space:nowrap;-webkit-text-stroke:0.2px #52565c">Regular</div><div style="position:absolute;left:2911px;top:1916.5px;width:245px;height:50px;border-radius:25px;background:#f5f6f8;color:#52565c;font-size:29px;line-height:50px;text-align:center;white-space:nowrap;-webkit-text-stroke:0.2px #52565c">Default Location</div><svg style="position:absolute;left:3384px;top:1925.5px" width="40" height="40" viewBox="0 0 24 24" fill="none" stroke="#5f6369" stroke-width="1.6" stroke-linecap="round" stroke-linejoin="round"><path d="M2.2 12C4.2 8 7.8 5.6 12 5.6S19.8 8 21.8 12C19.8 16 16.2 18.4 12 18.4S4.2 16 2.2 12z"/><circle cx="12" cy="12" r="2.4" stroke-width="2"/></svg><div style="position:absolute;left:561px;top:2088.5px;width:80px;height:40px;line-height:40px;text-align:center;font-size:32px;color:#575b61">8</div><div style="position:absolute;left:716px;top:2089.3px;height:38.4px;line-height:38.4px;font-size:32px;font-weight:400;color:#575b61;white-space:nowrap;">#t-str:35</div><div style="position:absolute;left:1023px;top:2062.5px;width:92px;height:92px;border-radius:50%;background:#fbfbfc"></div><svg style="position:absolute;left:1050px;top:2089.5px" width="39" height="39" viewBox="0 0 24 24" fill="none" stroke="#b9bcc1" stroke-width="1.3" stroke-linecap="square"><rect x="1.5" y="1.5" width="21" height="21"/><circle cx="8" cy="8" r="2"/><path d="M3 21l11-10 8 5"/></svg><div style="position:absolute;left:1132px;top:2063.3px;height:36.5px;line-height:36.5px;font-size:30.4px;font-weight:400;color:#25292f;white-space:nowrap;-webkit-text-stroke:0.7px #25292f;">User Kazim</div><div style="position:absolute;left:1132px;top:2108.8px;height:36.5px;line-height:36.5px;font-size:30.4px;font-weight:400;color:#a3a7ad;white-space:nowrap;">077009000771</div><div style="position:absolute;left:1492px;top:2090.3px;height:36.5px;line-height:36.5px;font-size:30.4px;font-weight:400;color:#575b61;white-space:nowrap;">01 Jan, 2024</div><div style="position:absolute;left:1807px;top:2089.3px;height:38.4px;line-height:38.4px;font-size:32px;font-weight:400;color:#2b2f36;white-space:nowrap;-webkit-text-stroke:1.0px #2b2f36;">4</div><div style="position:absolute;left:2005px;top:2083.5px;width:124px;height:50px;border-radius:25px;background:#fde4e0;color:#cc5f4b;font-size:29px;line-height:50px;text-align:center;white-space:nowrap;-webkit-text-stroke:0.2px #cc5f4b">Unpaid</div><div style="position:absolute;left:2264px;top:2083.5px;width:206px;height:50px;border-radius:25px;background:#dde8f5;color:#4f74ad;font-size:29px;line-height:50px;text-align:center;white-space:nowrap;-webkit-text-stroke:0.2px #4f74ad">Order Placed</div><div style="position:absolute;left:2609px;top:2083.5px;width:128px;height:50px;border-radius:25px;background:#f5f6f8;color:#52565c;font-size:29px;line-height:50px;text-align:center;white-space:nowrap;-webkit-text-stroke:0.2px #52565c">Regular</div><div style="position:absolute;left:2911px;top:2083.5px;width:245px;height:50px;border-radius:25px;background:#f5f6f8;color:#52565c;font-size:29px;line-height:50px;text-align:center;white-space:nowrap;-webkit-text-stroke:0.2px #52565c">Default Location</div><svg style="position:absolute;left:3384px;top:2092.5px" width="40" height="40" viewBox="0 0 24 24" fill="none" stroke="#5f6369" stroke-width="1.6" stroke-linecap="round" stroke-linejoin="round"><path d="M2.2 12C4.2 8 7.8 5.6 12 5.6S19.8 8 21.8 12C19.8 16 16.2 18.4 12 18.4S4.2 16 2.2 12z"/><circle cx="12" cy="12" r="2.4" stroke-width="2"/></svg><div style="position:absolute;left:561px;top:2254.0px;width:80px;height:40px;line-height:40px;text-align:center;font-size:32px;color:#575b61">9</div><div style="position:absolute;left:716px;top:2254.8px;height:38.4px;line-height:38.4px;font-size:32px;font-weight:400;color:#575b61;white-space:nowrap;">#t-str:34</div><div style="position:absolute;left:1023px;top:2228.0px;width:92px;height:92px;border-radius:50%;background:#fbfbfc"></div><svg style="position:absolute;left:1050px;top:2255.0px" width="39" height="39" viewBox="0 0 24 24" fill="none" stroke="#b9bcc1" stroke-width="1.3" stroke-linecap="square"><rect x="1.5" y="1.5" width="21" height="21"/><circle cx="8" cy="8" r="2"/><path d="M3 21l11-10 8 5"/></svg><div style="position:absolute;left:1132px;top:2228.8px;height:36.5px;line-height:36.5px;font-size:30.4px;font-weight:400;color:#25292f;white-space:nowrap;-webkit-text-stroke:0.7px #25292f;">User Kazim</div><div style="position:absolute;left:1132px;top:2274.3px;height:36.5px;line-height:36.5px;font-size:30.4px;font-weight:400;color:#a3a7ad;white-space:nowrap;">077009000771</div><div style="position:absolute;left:1492px;top:2255.8px;height:36.5px;line-height:36.5px;font-size:30.4px;font-weight:400;color:#575b61;white-space:nowrap;">01 Jan, 2024</div><div style="position:absolute;left:1807px;top:2254.8px;height:38.4px;line-height:38.4px;font-size:32px;font-weight:400;color:#2b2f36;white-space:nowrap;-webkit-text-stroke:1.0px #2b2f36;">8</div><div style="position:absolute;left:2005px;top:2249.0px;width:124px;height:50px;border-radius:25px;background:#fde4e0;color:#cc5f4b;font-size:29px;line-height:50px;text-align:center;white-space:nowrap;-webkit-text-stroke:0.2px #cc5f4b">Unpaid</div><div style="position:absolute;left:2264px;top:2249.0px;width:206px;height:50px;border-radius:25px;background:#dde8f5;color:#4f74ad;font-size:29px;line-height:50px;text-align:center;white-space:nowrap;-webkit-text-stroke:0.2px #4f74ad">Order Placed</div><div style="position:absolute;left:2609px;top:2249.0px;width:128px;height:50px;border-radius:25px;background:#f5f6f8;color:#52565c;font-size:29px;line-height:50px;text-align:center;white-space:nowrap;-webkit-text-stroke:0.2px #52565c">Regular</div><div style="position:absolute;left:2911px;top:2249.0px;width:245px;height:50px;border-radius:25px;background:#f5f6f8;color:#52565c;font-size:29px;line-height:50px;text-align:center;white-space:nowrap;-webkit-text-stroke:0.2px #52565c">Default Location</div><svg style="position:absolute;left:3384px;top:2258.0px" width="40" height="40" viewBox="0 0 24 24" fill="none" stroke="#5f6369" stroke-width="1.6" stroke-linecap="round" stroke-linejoin="round"><path d="M2.2 12C4.2 8 7.8 5.6 12 5.6S19.8 8 21.8 12C19.8 16 16.2 18.4 12 18.4S4.2 16 2.2 12z"/><circle cx="12" cy="12" r="2.4" stroke-width="2"/></svg></div></body></html>
